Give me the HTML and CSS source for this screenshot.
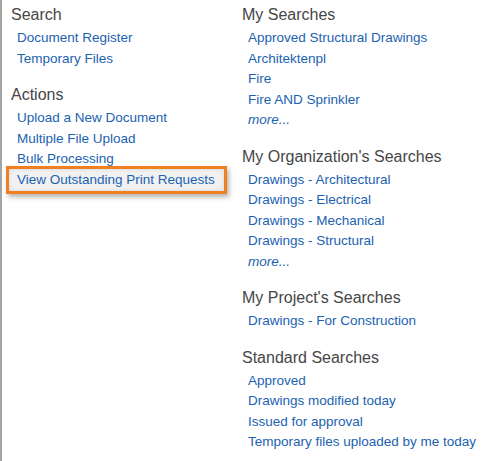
FILE: index.html
```html
<!DOCTYPE html>
<html lang="en">
<head>
    <meta charset="UTF-8">
    <title>Documents</title>
    <link rel="stylesheet" href="styles.css">
</head>
<body>
    <div class="page">
        <div class="column">
            <div class="group">
                <h2>Search</h2>
                <ul>
                    <li><a href="#">Document Register</a></li>
                    <li><a href="#">Temporary Files</a></li>
                </ul>
            </div>
            <div class="group">
                <h2>Actions</h2>
                <ul>
                    <li><a href="#">Upload a New Document</a></li>
                    <li><a href="#">Multiple File Upload</a></li>
                    <li><a href="#">Bulk Processing</a></li>
                    <li class="highlight"><a href="#">View Outstanding Print Requests</a></li>
                </ul>
            </div>
        </div>

        <div class="column">
            <div class="group">
                <h2>My Searches</h2>
                <ul>
                    <li><a href="#">Approved Structural Drawings</a></li>
                    <li><a href="#">Architektenpl</a></li>
                    <li><a href="#">Fire</a></li>
                    <li><a href="#">Fire AND Sprinkler</a></li>
                    <li><a href="#" class="more">more...</a></li>
                </ul>
            </div>
            <div class="group">
                <h2>My Organization's Searches</h2>
                <ul>
                    <li><a href="#">Drawings - Architectural</a></li>
                    <li><a href="#">Drawings - Electrical</a></li>
                    <li><a href="#">Drawings - Mechanical</a></li>
                    <li><a href="#">Drawings - Structural</a></li>
                    <li><a href="#" class="more">more...</a></li>
                </ul>
            </div>
            <div class="group">
                <h2>My Project's Searches</h2>
                <ul>
                    <li><a href="#">Drawings - For Construction</a></li>
                </ul>
            </div>
            <div class="group">
                <h2>Standard Searches</h2>
                <ul>
                    <li><a href="#">Approved</a></li>
                    <li><a href="#">Drawings modified today</a></li>
                    <li><a href="#">Issued for approval</a></li>
                    <li><a href="#">Temporary files uploaded by me today</a></li>
                </ul>
            </div>
        </div>
    </div>
</body>
</html>
```

FILE: styles.css
```css
body {
    margin: 0;
    font-family: "Liberation Sans", Arial, sans-serif;
    background-color: #fff;
}

.page {
    display: grid;
    grid-template-columns: 231px 1fr;
    min-height: 100vh;
    box-sizing: border-box;
    padding: 5px 0 0 9px;
    border-left: 2px solid #a4a4a4;
}

.group {
    margin-bottom: 16px;
}

h2 {
    margin: 0 0 3px;
    font-size: 16px;
    font-weight: normal;
    line-height: 20px;
    color: #464646;
}

ul {
    list-style: none;
    margin: 0;
    padding: 0 0 0 6px;
}

li {
    font-size: 13.5px;
    line-height: 20.5px;
}

a {
    color: #1b62b1;
    text-decoration: none;
}

a:hover {
    text-decoration: underline;
}

.more {
    font-style: italic;
}

.highlight {
    position: relative;
    z-index: 0;
}

.highlight::before {
    content: "";
    position: absolute;
    z-index: -1;
    left: -11px;
    top: -4px;
    width: 215px;
    height: 22px;
    background: #f1f1f1;
    border: 3px solid #f0801f;
    box-shadow: 2px 3px 5px rgba(0, 0, 0, 0.3), inset 0 0 4px rgba(0, 0, 0, 0.12);
}
```
